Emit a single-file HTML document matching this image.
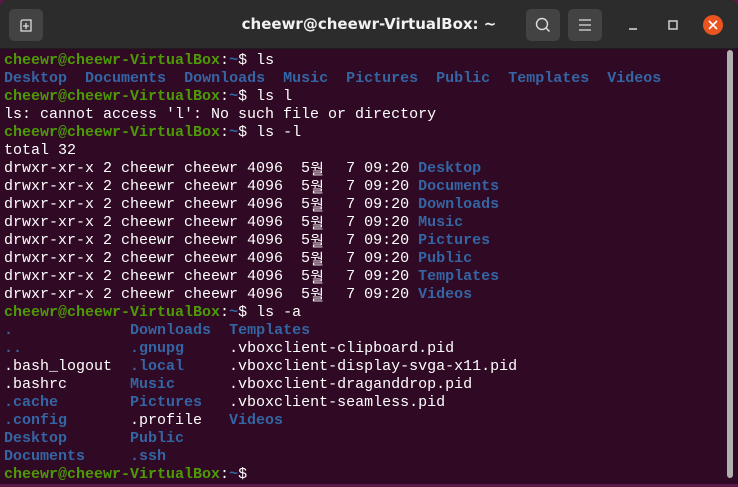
<!DOCTYPE html>
<html><head><meta charset="utf-8"><style>
html,body{margin:0;padding:0;width:738px;height:487px;overflow:hidden;background:#5a1a48;}
.win{position:absolute;left:0;top:0;width:738px;height:484px;background:#300a24;border-radius:8px 8px 0 0;overflow:hidden;}
.tb{position:absolute;left:0;top:0;width:738px;height:48px;background:#2c2c2c;border-bottom:1px solid #1e1e1e;}
.btn{position:absolute;top:9px;width:34px;height:32px;background:#434343;border-radius:5px;}
.title{position:absolute;left:0;width:738px;top:15px;text-align:center;color:#f2f2f2;font:bold 15px "DejaVu Sans","Liberation Sans",sans-serif;}
.term{position:absolute;left:4px;top:52px;font:15px/18px "Liberation Mono","DejaVu Sans Mono",monospace;color:#ffffff;white-space:pre;}
.g{color:#4e9a06;font-weight:bold}.b{color:#3465a4;font-weight:bold}.bl{color:#3465a4}
.k{display:inline-block;width:18px;font-family:"Noto Sans CJK KR",sans-serif;font-size:15px;line-height:18px;vertical-align:top}
.sb{position:absolute;left:727px;top:50px;width:6px;height:428px;background:#b0b0b0;border-radius:3px;}
</style></head><body>
<div class="win">
<div class="tb">
<div class="btn" style="left:9px"><svg width="34" height="32"><path d="M12 22V13q0-2 2-2h8v11z" fill="none" stroke="#ddd" stroke-width="1.3"/><path d="M17 14v6M14 17h6" stroke="#ddd" stroke-width="1.3"/></svg></div>
<div class="title">cheewr@cheewr-VirtualBox: ~</div>
<div class="btn" style="left:526px"><svg width="34" height="32"><circle cx="16" cy="15" r="5.5" fill="none" stroke="#ddd" stroke-width="1.4"/><path d="M20 19l3.5 3.5" stroke="#ddd" stroke-width="1.5"/></svg></div>
<div class="btn" style="left:568px"><svg width="34" height="32"><path d="M11 11h12M11 16h12M11 21h12" stroke="#ddd" stroke-width="1.3"/></svg></div>
<svg style="position:absolute;left:620px;top:14px" width="110" height="22"><path d="M9 15h8" stroke="#ddd" stroke-width="1.5"/><rect x="49" y="7" width="8" height="8" fill="none" stroke="#ddd" stroke-width="1.4"/><circle cx="93" cy="11" r="10" fill="#e95420"/><path d="M89 7l8 8M97 7l-8 8" stroke="#fff" stroke-width="1.6"/></svg>
</div>
<div class="term"><span class="g">cheewr@cheewr-VirtualBox</span>:<span class="b">~</span>$ ls
<span class="b">Desktop</span>  <span class="b">Documents</span>  <span class="b">Downloads</span>  <span class="b">Music</span>  <span class="b">Pictures</span>  <span class="b">Public</span>  <span class="b">Templates</span>  <span class="b">Videos</span>
<span class="g">cheewr@cheewr-VirtualBox</span>:<span class="b">~</span>$ ls l
ls: cannot access 'l': No such file or directory
<span class="g">cheewr@cheewr-VirtualBox</span>:<span class="b">~</span>$ ls -l
total 32
drwxr-xr-x 2 cheewr cheewr 4096  5<span class="k">월</span>  7 09:20 <span class="b">Desktop</span>
drwxr-xr-x 2 cheewr cheewr 4096  5<span class="k">월</span>  7 09:20 <span class="b">Documents</span>
drwxr-xr-x 2 cheewr cheewr 4096  5<span class="k">월</span>  7 09:20 <span class="b">Downloads</span>
drwxr-xr-x 2 cheewr cheewr 4096  5<span class="k">월</span>  7 09:20 <span class="b">Music</span>
drwxr-xr-x 2 cheewr cheewr 4096  5<span class="k">월</span>  7 09:20 <span class="b">Pictures</span>
drwxr-xr-x 2 cheewr cheewr 4096  5<span class="k">월</span>  7 09:20 <span class="b">Public</span>
drwxr-xr-x 2 cheewr cheewr 4096  5<span class="k">월</span>  7 09:20 <span class="b">Templates</span>
drwxr-xr-x 2 cheewr cheewr 4096  5<span class="k">월</span>  7 09:20 <span class="b">Videos</span>
<span class="g">cheewr@cheewr-VirtualBox</span>:<span class="b">~</span>$ ls -a
<span class="b">.</span>             <span class="b">Downloads</span>  <span class="b">Templates</span>
<span class="b">..</span>            <span class="b">.gnupg</span>     .vboxclient-clipboard.pid
.bash_logout  <span class="b">.local</span>     .vboxclient-display-svga-x11.pid
.bashrc       <span class="b">Music</span>      .vboxclient-draganddrop.pid
<span class="b">.cache</span>        <span class="b">Pictures</span>   .vboxclient-seamless.pid
<span class="b">.config</span>       .profile   <span class="b">Videos</span>
<span class="b">Desktop</span>       <span class="b">Public</span>
<span class="b">Documents</span>     <span class="b">.ssh</span>
<span class="g">cheewr@cheewr-VirtualBox</span>:<span class="b">~</span>$ </div>
<div class="sb"></div>
</div>
</body></html>
